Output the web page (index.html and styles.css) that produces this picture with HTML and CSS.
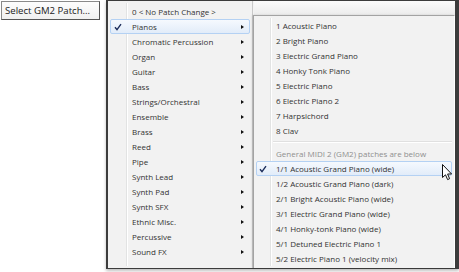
FILE: index.html
```html
<!DOCTYPE html>
<html lang="en">
<head>
    <meta charset="UTF-8">
    <title>Select GM2 Patch</title>
    <link rel="stylesheet" href="styles.css">
</head>
<body>
<button class="patch-btn" type="button">Select GM2 Patch...</button>

<div class="popup-area">
    <div class="backdrop"></div>

    <ul class="menu menu-main">
        <li class="item"><span class="check"></span><span class="label">0 &lt; No Patch Change &gt;</span></li>
        <li class="item active"><span class="check"><svg viewBox="0 0 8 8" width="8" height="8"><path d="M1 4.2 L3 6.6 L7 1.2" /></svg></span><span class="label">Pianos</span><span class="arrow"></span></li>
        <li class="item"><span class="check"></span><span class="label">Chromatic Percussion</span><span class="arrow"></span></li>
        <li class="item"><span class="check"></span><span class="label">Organ</span><span class="arrow"></span></li>
        <li class="item"><span class="check"></span><span class="label">Guitar</span><span class="arrow"></span></li>
        <li class="item"><span class="check"></span><span class="label">Bass</span><span class="arrow"></span></li>
        <li class="item"><span class="check"></span><span class="label">Strings/Orchestral</span><span class="arrow"></span></li>
        <li class="item"><span class="check"></span><span class="label">Ensemble</span><span class="arrow"></span></li>
        <li class="item"><span class="check"></span><span class="label">Brass</span><span class="arrow"></span></li>
        <li class="item"><span class="check"></span><span class="label">Reed</span><span class="arrow"></span></li>
        <li class="item"><span class="check"></span><span class="label">Pipe</span><span class="arrow"></span></li>
        <li class="item"><span class="check"></span><span class="label">Synth Lead</span><span class="arrow"></span></li>
        <li class="item"><span class="check"></span><span class="label">Synth Pad</span><span class="arrow"></span></li>
        <li class="item"><span class="check"></span><span class="label">Synth SFX</span><span class="arrow"></span></li>
        <li class="item"><span class="check"></span><span class="label">Ethnic Misc.</span><span class="arrow"></span></li>
        <li class="item"><span class="check"></span><span class="label">Percussive</span><span class="arrow"></span></li>
        <li class="item"><span class="check"></span><span class="label">Sound FX</span><span class="arrow"></span></li>
    </ul>

    <ul class="menu menu-sub">
        <li class="item"><span class="check"></span><span class="label">1 Acoustic Piano</span></li>
        <li class="item"><span class="check"></span><span class="label">2 Bright Piano</span></li>
        <li class="item"><span class="check"></span><span class="label">3 Electric Grand Piano</span></li>
        <li class="item"><span class="check"></span><span class="label">4 Honky Tonk Piano</span></li>
        <li class="item"><span class="check"></span><span class="label">5 Electric Piano</span></li>
        <li class="item"><span class="check"></span><span class="label">6 Electric Piano 2</span></li>
        <li class="item"><span class="check"></span><span class="label">7 Harpsichord</span></li>
        <li class="item"><span class="check"></span><span class="label">8 Clav</span></li>
        <li class="separator"></li>
        <li class="item disabled"><span class="check"></span><span class="label">General MIDI 2 (GM2) patches are below</span></li>
        <li class="item active"><span class="check"><svg viewBox="0 0 8 8" width="8" height="8"><path d="M1 4.2 L3 6.6 L7 1.2" /></svg></span><span class="label">1/1 Acoustic Grand Piano (wide)</span></li>
        <li class="item"><span class="check"></span><span class="label">1/2 Acoustic Grand Piano (dark)</span></li>
        <li class="item"><span class="check"></span><span class="label">2/1 Bright Acoustic Piano (wide)</span></li>
        <li class="item"><span class="check"></span><span class="label">3/1 Electric Grand Piano (wide)</span></li>
        <li class="item"><span class="check"></span><span class="label">4/1 Honky-tonk Piano (wide)</span></li>
        <li class="item"><span class="check"></span><span class="label">5/1 Detuned Electric Piano 1</span></li>
        <li class="item"><span class="check"></span><span class="label">5/2 Electric Piano 1 (velocity mix)</span></li>
    </ul>

    <!-- mouse pointer over the selected patch -->
    <svg class="cursor" viewBox="0 0 11 17" width="11" height="17">
        <path d="M0.5 0.5 L0.5 13.5 L3.5 10.8 L5.6 15.6 L7.6 14.7 L5.6 10 L9.6 10 Z" />
    </svg>
</div>
</body>
</html>
```

FILE: styles.css
```css
body {
    margin: 0;
    width: 459px;
    height: 272px;
    position: relative;
    background: #fff;
    font-family: "Open Sans", "Noto Sans", sans-serif;
    color: #333;
    overflow: hidden;
}

.patch-btn {
    display: block;
    margin: 1px 0 0 1px;
    width: 99px;
    height: 19px;
    padding: 0 0 0 3px;
    text-align: left;
    font-family: "Open Sans", "Noto Sans", sans-serif;
    font-size: 9.6px;
    color: #222;
    background: linear-gradient(#fdfdfd, #f0f0f0);
    border: 1px solid #8a8a8a;
    border-right-color: #555;
    border-bottom-color: #555;
}

.popup-area {
    position: absolute; /* the open popup sits over the page */
    left: 106px;
    top: 0;
    width: 347px;
    height: 266px;
    display: flex;
    align-items: flex-start;
    border: 2px solid #3c3c3c;
    border-top-width: 1px;
    border-right-width: 4px;
    background: #f3f3f3;
    box-shadow: 0 2px 3px rgba(0, 0, 0, 0.25);
}

.backdrop {
    position: absolute;
    left: 146px;
    right: 0;
    top: 0;
    height: 14px;
    background: linear-gradient(#fbfbfb, #ececec);
}

.menu {
    list-style: none;
    margin: 0;
    padding: 2px;
    background: #f2f2f2;
    font-size: 8px;
    position: relative;
}

.menu-main {
    width: 140px;
    height: 262px;
    padding-top: 3px;
    border-right: 1px solid #c9c9c9;
    --check-w: 16px;
}

.menu-sub {
    flex: 1;
    margin-top: 14px;
    height: 248px;
    border: 1px solid #a3a3a3;
    border-bottom: none;
    border-right-color: #fff;
    box-shadow: -1px 0 2px rgba(0, 0, 0, 0.12);
    --check-w: 14px;
}

/* gutter line between check column and labels */
.menu::before {
    content: "";
    position: absolute;
    top: 2px;
    bottom: 2px;
    left: calc(2px + var(--check-w));
    width: 1px;
    background: #e2e3e3;
    border-right: 1px solid #fff;
}

.item {
    display: flex;
    align-items: center;
    height: 15px;
    box-sizing: border-box;
    border: 1px solid transparent;
    border-radius: 2px;
    white-space: nowrap;
    position: relative;
}

.item.active {
    background: linear-gradient(#f5f9fe, #e2ecf9);
    border-color: #b4d1f3;
}

.item.disabled {
    color: #8f8f8f;
}

.check {
    width: var(--check-w);
    flex: none;
    display: flex;
    justify-content: center;
    margin-left: -1px;
}

.check path {
    fill: none;
    stroke: #1b2c5a;
    stroke-width: 1.4;
}

.label {
    margin-left: 6px;
    flex: 1;
}

.arrow {
    width: 0;
    height: 0;
    margin-right: 5px;
    border-left: 3px solid #111;
    border-top: 2.5px solid transparent;
    border-bottom: 2.5px solid transparent;
}

.separator {
    height: 8px;
    margin-left: calc(var(--check-w) + 3px);
    position: relative;
}

.separator::after {
    content: "";
    position: absolute;
    left: 0;
    right: 0;
    top: 3px;
    height: 1px;
    background: #e0e0e0;
    border-bottom: 1px solid #fff;
}

.cursor {
    position: absolute;
    left: 334px;
    top: 163px;
}

.cursor path {
    fill: #fff;
    stroke: #111;
    stroke-width: 1;
    stroke-linejoin: round;
}
```
